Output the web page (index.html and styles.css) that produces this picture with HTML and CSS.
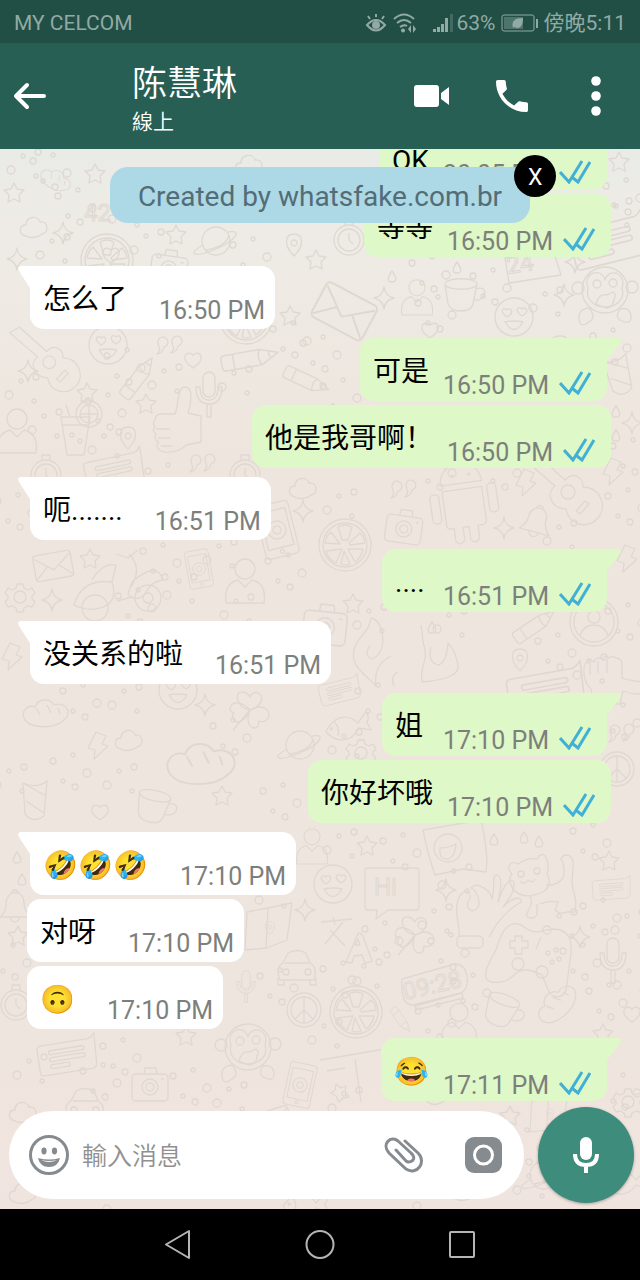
FILE: index.html
```html
<!DOCTYPE html>
<html lang="zh">
	<head>
		<meta charset="UTF-8">
		<meta name="viewport" content="width=device-width, initial-scale=1">
		<title>陈慧琳</title>
		<link rel="stylesheet" href="styles.css">
	</head>
	<body>
		<svg class="defs" width="0" height="0" aria-hidden="true">
			<defs>
				<symbol id="ticks" viewBox="0 0 32 24"><path d="M1 12l9 10L23 1M14 18l5 4L31 2"/></symbol>
				<!-- 背景小图案，原点都在中心 -->
				<path id="star" d="M0-9l3 6 7 1-5 5 1 7-6-3-6 3 1-7-5-5 7-1z"/>
				<path id="spark" d="M0-11q1 9 10 11q-9 2-10 11q-1-9-10-11q9-2 10-11z"/>
				<path id="heart" d="M0 8C-14-1-7-11 0-5C7-11 14-1 0 8z"/>
				<path id="cloud" d="M-9 9c-8-2-7-11 0-11c0-9 12-10 14-3c9-1 9 11 2 12c-3 3-12 5-16 2z"/>
				<path id="drop" d="M0-6c5 7 5 11 0 11s-5-4 0-11z"/>
				<path id="bolt" d="M-2-13L8-9L4-1l6 2L-4 14l1-9-7-2z"/>
				<path id="pin" d="M0 13C-11 2-9-9 0-9S11 2 0 13zM0-3a3 3 0 1 0 .1 0z"/>
				<path id="quotes" d="M-10-4a5 5 0 1 1 6 4q-1 6-7 7q4-4 2-7zM4-5a5 5 0 1 1 6 4q-1 6-7 7q4-4 2-7z"/>
				<g id="mic2"><rect x="-6" y="-20" width="12" height="25" rx="6"/><path d="M-13-5q0 17 13 17T13-5h-4q0 13-9 13T-9-5zM-2 12v13h4V12"/></g>
				<g id="clover"><path d="M0 0c-14-2-16-19-8-18q5 0 8 5q3-6 8-4c8 3 2 15-8 17c12-7 22 0 18 8q-3 5-9 3q0 7-5 7c-7-1-7-11-4-18c-4 10-12 15-16 10q-3-4 0-7q-6-2-3-7c3-6 13-3 19 4L-17 20"/></g>
				<g id="mail"><rect x="-19" y="-12" width="38" height="26" rx="3"/><path d="M-18-9L0 5L18-9M-18 12L-6 1M18 12L6 1"/></g>
				<g id="note"><path d="M-26-13h48q4-1 7-5l-2 31q-1 4-5 4h-48q-4 0-4-4v-22q0-4 4-4z"/><rect x="-19" y="-7" width="36" height="4" rx="2"/><rect x="-19" y="0" width="36" height="4" rx="2"/><rect x="-19" y="7" width="20" height="4" rx="2"/></g>
				<g id="smile"><circle r="19"/><path d="M-9 5q9 15 18 0q-9-2-18 0zM-7 0c-9-6-3-11 0-7c4-4 8 3 0 7zM8-1c-9-6-3-11 0-7c4-4 8 3 0 7z"/></g>
				<g id="camera"><rect x="-18" y="-11" width="36" height="27" rx="4"/><circle cy="2" r="8"/><circle cy="2" r="4"/><path d="M-6-11l1-6H6l1 6M11-6h3"/></g>
				<g id="citrus"><circle r="26"/><circle r="22"/><path d="M-3-5l-4-13q7-4 14 0l-4 13zM4-2l11-10q5 5 5 10l-15 2zM3 4l15 0q-2 9-8 13zM-3 4l-6 14q-8-4-10-12zM-5-1l-15-1q1-7 6-11zM-1 6l-3 13q5 2 9 0z"/></g>
				<g id="pencil"><path d="M-22-5h30L23 0L8 8h-30q-3 0-3-3v-7q0-3 3-3zM8-5q-4 6 0 13M-15-5V8M16-3q-2 3 0 6"/></g>
				<g id="cup"><path d="M-18-10c0-7 32-7 32 0s-32 7-32 0l3 20q3 7 13 7t12-7l4-20M13-5c12-5 12 12-1 11"/></g>
				<g id="planet"><circle r="14"/><path d="M-13 4c-19 11-6 12 13 4S28-12 12-9"/><path d="M-10 9q20-3 23-15"/></g>
				<g id="bell"><path d="M-15 9q7-6 6-14c1-14 18-14 18 0q0 8 7 14zM-5 10q5 8 10 0M-3-15a3 3 0 1 1 6 0"/></g>
				<g id="gear"><circle r="6"/><path d="M-3-13h6l1 4 4 2 4-2 3 5-3 3v3l3 3-3 5-4-1-4 2-1 4h-6l-1-4-4-2-4 1-3-5 3-3v-3l-3-3 3-5 4 2 4-2z"/></g>
				<g id="watch"><circle r="15"/><circle r="11"/><path d="M0-7v7l4 4M-4-15v-5h8v5"/></g>
				<g id="person"><circle cy="-14" r="10"/><path d="M-19 20c-2-15 4-21 12-23l7 7l7-7c9 2 14 9 12 23z"/></g>
				<g id="glass"><path d="M-14-16h29l-6 38H-8zM-13-8h27M-5-16l-4-12"/><circle cx="14" cy="-19" r="13"/><circle cx="14" cy="-19" r="9"/><circle cx="-3" cy="2" r="2"/><circle cx="5" cy="8" r="2"/><path d="M14-28v18M5-19h18"/></g>
				<g id="thumb"><path d="M-17-1q0-6 7-6h13c4-9 2-27 10-27c9 0 6 18 3 26l13 3v26l-15 3q-7 8-21 7c-8-1-10-7-6-10q-6-2-3-8q-5-4-1-7q-3-4 0-7z"/><path d="M-16 8h14M-14 17h12M-11 25H0"/></g>
				<g id="tablet"><rect x="-17" y="-27" width="34" height="54" rx="4"/><rect x="-13" y="-20" width="26" height="38"/><circle cy="22" r="2"/><circle r="9"/><circle r="4"/></g>
				<g id="scooter"><circle cx="-29" cy="18" r="13"/><circle cx="24" cy="8" r="13"/><circle cx="24" cy="8" r="5"/><path d="M-50 15q8-27 38-23q5 13-3 22q-16 10-35 1zM-32-10q11-18 24-15l-4 17M8-8q25-22 31-2q-12 1-18 14q-9 9-17 0zM-7 11l15-4M5-36q14 14 2 33M-8-36l12 4 10-8"/></g>
				<g id="android"><path d="M-20-16h40v34q0 4-5 4h-4v13q-5 6-9 0V22h-6v13q-5 6-9 0V22h-3q-4 0-4-4zM-21-22q2-19 21-19t21 19zM-13-37l-5-8M13-37l5-8"/><rect x="-33" y="-14" width="9" height="29" rx="4"/><rect x="25" y="-18" width="9" height="29" rx="4"/><circle cx="-8" cy="-30" r="1"/><circle cx="9" cy="-30" r="1"/></g>
				<g id="guitar"><path d="M-36-42l30 27c9-10 19-1 18 7c17 0 25 19 15 31c-11 12-29 7-32-9c-14 0-21-15-11-23l-31-27zM5 16l9-10 4 3-9 10z"/><circle cx="-3" cy="-3" r="7"/></g>
				<g id="pad"><path d="M-32-9c9-32 21-29 31-21c9 6 17 1 26 0c17 0 19 13 18 25l-5 36c-2 8-13 9-17 2l-7-17q-19-10-28 0q-8 9-23 7c-10-3-5-15 5-32z"/><path d="M-13-23h7v5h6v7h-6v6h-7v-6h-5v-7h5zM8-10l5-12"/><circle cx="-10" cy="5" r="6"/><circle cx="14" cy="13" r="6"/><circle cx="20" cy="-6" r="2"/><circle cx="28" cy="-9" r="2"/><circle cx="24" cy="3" r="2"/><circle cx="31" cy="0" r="2"/></g>
				<g id="cat"><path d="M-36-23q1-7 9-3q9-7 19-5q5-8 9-2q4 9 1 17q6 12-4 18q-20 9-30-3q-6-9-1-15q-4-4-3-7z"/><path d="M-15 5q3 8-1 14l-3 7q7 5 11-1v-11M-5 14q8-4 18-2l-3 8q5 5 12 2l8 0q2-8-1-20c-6-12 4-30-4-36q-6-3-9 3q5 8 2 19q-6 8-17 7M-25-9q4 5 8-1q5 4 7-1"/><circle cx="-24" cy="-16" r="3"/><circle cx="-8" cy="-19" r="3"/></g>
				<g id="okhand"><path d="M-20 21c1-10-4-21-2-31q1-11 9-14q5 2 4 7q-6 9 2 13q8-2 7-10q-2-10-8-13c6-8 21 4 21 11c4-15-1-24 5-24q7 2 1 27c6-19 14-26 16-19q1 9-11 24c8-9 19-12 18-5q-14 8-25 23l-7 12"/><rect x="-22" y="21" width="26" height="12" rx="4"/></g>
				<g id="car"><path d="M-17 14h34q4-13-4-17l-4-10q-9-5-18 0l-5 10q-8 4-3 17zM-12-3h24M-13 14v5h-6v-7M13 14v5h6v-7"/><circle cx="-11" cy="6" r="3"/><circle cx="11" cy="6" r="3"/></g>
				<g id="monkey"><circle r="23"/><path d="M-17-2c-6-16 14-21 17-8c4-13 22-7 17 8c4 12-7 19-17 19s-20-7-17-19z"/><circle cx="-27" cy="-2" r="6"/><circle cx="27" cy="-3" r="6"/><circle cx="-8" cy="-6" r="4"/><circle cx="8" cy="-7" r="4"/><path d="M-9 14q3-11 11-9l6-3q4 3 1 7q0 8-8 9zM-16 18q-11 1-10 11t10 3q8-5 0-14M15 19q10-2 11 7t-9 5q-8-3-2-12"/></g>
				<g id="fish"><path d="M-22 3c10-14 25-15 33-3l10-10q3 6-1 11l3 8-12-4c-9 13-24 12-33-2zM-12-5q5 6 1 14"/><circle cx="-16" cy="1" r="1"/></g>
				<g id="map"><path d="M-23-17l21-4 24-5-5 37-20 8-22 2zM-2-20l-2 39"/><use href="#pin" transform="translate(0 -2) scale(.6)"/></g>
				<g id="bread"><path d="M-20 6c-5-8 2-16 10-13c3-9 15-9 19-2c12-4 19 8 10 15c-9 9-32 9-39 0zM-9-6l4 7M2-9l4 8M13-6l2 6"/></g>
				<g id="kite"><path d="M-12-17q14 6 24-2l-3 35q-11 8-19-2zM-12-17l23 13M-9 1l18 12"/></g>
				<g id="peace"><circle r="17"/><circle r="13"/><path d="M0-13v26M0 0l-9 9M0 0l9 9"/></g>
				<g id="avatar"><circle r="24"/><circle r="20"/><circle cy="-5" r="6"/><path d="M-14 14q3-11 14-11t14 11"/></g>
				<g id="dino"><path d="M-24 30c-16-16-27-22-21-39c4-12 14-14 16-29q11 2 12 24q-2 14-11 17q-9-4-2-13M-24 30q-3-21 15-30M22 26c-3-18 8-20 1-40q-1-12-2-17M22 26q38-3 36-17q-3-16-10-22q-1 18-9 22q-12-2-8-18M-6 30q-4-10 4-14"/></g>
				<g id="dots"><circle cx="-17" cy="-9" r="3"/><circle cx="3" cy="-15" r="2"/><circle cx="17" cy="3" r="4"/><circle cx="-7" cy="11" r="2"/><circle cx="5" cy="17" r="3"/></g>
				<g id="dots2"><circle cx="-13" cy="5" r="4"/><circle cx="-1" cy="-9" r="2"/><circle cx="14" cy="-13" r="3"/><circle cx="12" cy="11" r="2"/></g>
			</defs>
		</svg>
		<div id="phone">
			<div class="status">
				<span class="carrier">MY CELCOM</span>
				<svg class="s-eye" viewBox="0 0 22 20"><path d="M2 12q9-10 18 0q-9 11-18 0z"/><circle cx="11" cy="12" r="3"/><path d="M11 4V1M5 6L3 3M17 6l2-3"/></svg>
				<svg class="s-wifi" viewBox="0 0 26 20"><path d="M2 6q10-9 20 0M5 10q7-6 14 0M8 14q4-3 7-1"/><path class="fill" d="M11 15.500a2 2 0 1 0 .1 0zM19 12v8l-3-4zM21 12v8l3-4z"/></svg>
				<svg class="s-signal" viewBox="0 0 21 20"><path d="M1 16h3v3H1zM5 14h3v5H5zM9 11h3v8H9zM13 5h3v14h-3z"/><path opacity=".3" d="M18 1h3v18h-3z"/></svg>
				<span class="percent">63%</span>
				<svg class="s-battery" viewBox="0 0 38 18"><rect x="1" y="1" width="32" height="16" rx="2"/><path class="level" d="M3 3h19v12H3z"/><path class="fill" d="M12 14c-2-7 2-10 10-10c0 8-3 12-9 9l4-5zM35 5h2v9h-2z"/></svg>
				<span class="clock">傍晚5:11</span>
			</div>
			<header class="top">
				<button class="back" type="button" aria-label="返回"><svg width="34" height="28" viewBox="0 0 34 28"><path d="M14 3L3 14l11 11M3 14h28"/></svg></button>
				<div class="who">
					<h1>陈慧琳</h1>
					<p>線上</p>
				</div>
				<div class="tools">
					<button type="button" aria-label="視訊"><svg width="36" height="24" viewBox="0 0 36 24"><path d="M3 1h19q3 0 3 3v16q0 3-3 3H3q-3 0-3-3V4q0-3 3-3zM27 9l8-6v18l-8-6z"/></svg></button>
					<button type="button" aria-label="通話"><svg width="32" height="32" viewBox="3 3 18 18"><path d="M6.620 10.790c1.440 2.830 3.760 5.140 6.590 6.590l2.200-2.200c.27-.27.67-.36 1.020-.24 1.120.37 2.330.57 3.570.57.55 0 1 .45 1 1V20c0 .55-.45 1-1 1-9.390 0-17-7.610-17-17 0-.55.45-1 1-1h3.500c.55 0 1 .45 1 1 0 1.250.2 2.450.57 3.570.11.35.03.74-.25 1.020l-2.200 2.200z"/></svg></button>
					<button type="button" aria-label="更多"><svg width="10" height="40" viewBox="0 0 10 40"><circle cx="5" cy="5" r="4.800"/><circle cx="5" cy="20" r="4.800"/><circle cx="5" cy="35" r="4.800"/></svg></button>
				</div>
			</header>
			<main class="chat">
				<svg class="doodles" viewBox="0 149 640 1060" preserveAspectRatio="xMidYMin slice" aria-hidden="true">
					<use href="#star" x="95" y="173"/><use href="#star" x="14" y="192"/><use href="#star" x="176" y="234"/><use href="#star" x="290" y="315"/><use href="#star" x="87" y="392"/><use href="#star" x="146" y="403"/><use href="#star" x="619" y="161"/><use href="#star" x="90" y="558"/><use href="#star" x="353" y="603"/><use href="#star" x="609" y="860"/><use href="#star" x="367" y="845"/><use href="#star" x="18" y="935"/><use href="#star" x="603" y="1033"/><use href="#star" x="510" y="1115"/><use href="#star" x="316" y="259"/><use href="#star" x="186" y="1035"/><use href="#star" x="222" y="795"/>
					<use href="#spark" x="63" y="233"/><use href="#spark" x="17" y="259"/><use href="#spark" x="28" y="371"/><use href="#spark" x="384" y="298"/><use href="#spark" x="564" y="295"/><use href="#spark" x="575" y="262"/><use href="#spark" x="52" y="600"/><use href="#spark" x="303" y="511"/><use href="#spark" x="504" y="528"/><use href="#spark" x="632" y="423"/><use href="#spark" x="446" y="890"/><use href="#spark" x="580" y="937"/><use href="#spark" x="305" y="910"/><use href="#spark" x="205" y="705"/>
					<use href="#heart" x="193" y="360"/><use href="#heart" x="111" y="255"/><use href="#heart" x="632" y="1014"/><use href="#heart" x="430" y="330"/><use href="#heart" x="100" y="812"/><use href="#heart" x="214" y="1185"/>
					<use href="#cloud" x="35" y="227"/><use href="#cloud" x="304" y="488"/><use href="#cloud" x="24" y="1112"/><use href="#cloud" x="24" y="1193"/><use href="#cloud" x="465" y="1190"/><use href="#cloud" x="250" y="165"/>
					<use href="#drop" x="392" y="277"/><use href="#drop" x="457" y="268"/><use href="#drop" x="616" y="412"/><use href="#drop" x="616" y="436"/><use href="#drop" x="17" y="858"/><use href="#drop" x="22" y="880"/><use href="#drop" x="524" y="838"/><use href="#drop" x="539" y="842"/><use href="#drop" x="494" y="840"/><use href="#drop" x="432" y="628"/>
					<use href="#bolt" x="526" y="482"/><use href="#bolt" x="613" y="471"/><use href="#bolt" x="12" y="656"/><use href="#bolt" x="627" y="558"/><use href="#bolt" x="98" y="745"/>
					<use href="#pin" x="294" y="243"/><use href="#pin" x="520" y="658"/><use href="#pin" x="128" y="436"/>
					<use href="#quotes" x="168" y="347"/><use href="#quotes" x="201" y="465"/><use href="#quotes" x="402" y="491"/><use href="#quotes" x="620" y="735"/>
					<use href="#mic2" x="209" y="392"/><use href="#mic2" x="613" y="958"/><use href="#mic2" transform="translate(246 985) scale(.7)"/>
					<use href="#clover" x="415" y="935"/><use href="#clover" x="250" y="710"/>
					<use href="#mail" transform="translate(53 565) rotate(-10)"/><use href="#mail" transform="translate(345 310) rotate(28) scale(1.500)"/><use href="#mail" transform="translate(272 1122) rotate(-17)"/>
					<use href="#note" transform="translate(115 470) rotate(-12)"/><use href="#note" transform="translate(612 888) rotate(-4) scale(.65)"/><use href="#note" transform="translate(68 1055) rotate(-9)"/><use href="#note" transform="translate(547 690) rotate(-10) scale(1.300)"/><use href="#note" transform="translate(340 690) rotate(-14) scale(.7)"/><use href="#note" transform="translate(610 240) rotate(-14) scale(1.300)"/>
					<use href="#smile" x="514" y="317"/><use href="#smile" x="333" y="884"/><use href="#smile" x="178" y="690"/><use href="#smile" x="108" y="345"/>
					<use href="#camera" transform="translate(404 527) rotate(8)"/><use href="#camera" transform="translate(169 267) rotate(8)"/><use href="#camera" transform="translate(325 625) rotate(6) scale(1.200)"/>
					<use href="#citrus" x="356" y="1012"/><use href="#citrus" x="107" y="260"/><use href="#citrus" x="345" y="545"/><use href="#citrus" x="246" y="318"/>
					<use href="#pencil" transform="translate(138 376) rotate(-52)"/><use href="#pencil" transform="translate(251 357) rotate(-10) scale(1.200)"/><use href="#pencil" transform="translate(308 380) rotate(25)"/><use href="#pencil" transform="translate(535 624) rotate(-34)"/><use href="#pencil" transform="translate(402 1020) rotate(55) scale(.6)"/>
					<use href="#cup" x="463" y="294"/><use href="#cup" transform="translate(503 1010) rotate(20)"/><use href="#planet" x="216" y="241"/><use href="#planet" x="544" y="1175"/>
					<use href="#bell" transform="translate(536 523) rotate(15)"/><use href="#bell" x="15" y="908"/><use href="#gear" x="20" y="597"/><use href="#gear" x="361" y="753"/><use href="#gear" x="628" y="1102"/><use href="#watch" x="349" y="240"/><use href="#watch" x="46" y="475"/><use href="#watch" x="245" y="475"/><use href="#watch" x="16" y="1005"/>
					<use href="#person" x="17" y="433"/><use href="#person" x="245" y="583"/><use href="#person" transform="translate(417 299) scale(.8)"/><use href="#glass" x="75" y="433"/><use href="#thumb" x="172" y="421"/><use href="#tablet" transform="translate(277 530) rotate(-14)"/><use href="#tablet" transform="translate(199 569) rotate(-10) scale(.7)"/><use href="#scooter" x="124" y="590"/>
					<use href="#android" transform="translate(464 505) rotate(-8)"/><use href="#guitar" x="571" y="495"/><use href="#pad" x="528" y="959"/><use href="#cat" x="545" y="890"/><use href="#okhand" x="479" y="915"/><use href="#car" x="297" y="966"/><use href="#monkey" x="605" y="290"/><use href="#monkey" x="248" y="1047"/><use href="#fish" transform="translate(347 725) rotate(-10)"/><use href="#map" x="270" y="929"/><use href="#bread" x="45" y="714"/><use href="#bread" x="560" y="350"/><use href="#kite" transform="translate(619 375) rotate(-15)"/><use href="#avatar" x="594" y="622"/><use href="#peace" x="617" y="769"/>
					<use href="#dino" x="400" y="656"/><use href="#bread" transform="translate(557 1005) rotate(-40)"/><use href="#bread" transform="translate(200 765) scale(1.500)"/><use href="#planet" x="300" y="745"/><use href="#person" transform="translate(459 1025) scale(.9)"/><use href="#thumb" transform="translate(615 675) rotate(90)"/><use href="#guitar" transform="translate(52 365) scale(.9)"/><use href="#bread" transform="translate(55 180) rotate(30) scale(.7)"/><use href="#kite" x="35" y="800"/><use href="#cup" transform="translate(155 806) rotate(12)"/><use href="#fish" x="305" y="1203"/><use href="#map" transform="translate(550 1115) scale(.8)"/><use href="#car" x="85" y="1104"/><use href="#fish" x="625" y="1180"/><use href="#camera" x="150" y="1085"/><use href="#peace" x="304" y="1010"/><use href="#mail" transform="translate(330 785) rotate(12)"/><use href="#cloud" x="130" y="740"/><use href="#kite" x="435" y="1085"/><use href="#tablet" transform="translate(300 1085) rotate(12) scale(.8)"/><use href="#person" transform="translate(312 848) scale(.8)"/>
					<path d="M368 868h48q3 0 3 3v36q0 3-3 3h-28l-12 9 1-9h-9q-3 0-3-3v-36q0-3 3-3zM423 830l58-10q5 20 6 42l-1 10-23-3-28 6q-6-16-12-45zM402 979l53-15q10 0 12 12t-6 17l-48 12q-8 0-10-9t-1-17zM415 1006l47-13 1 5-47 12zM321 922l31-3M333 917l2 8M325 944l18-22M330 930l15 16M346 962l11-26q2-6 6 0l9 25-7 2-3-8-8 1-2 7zM355 945l3-6 2 6zM320 1060l65-11 13 52M327 1071l18-3M336 1084l5 4 5-2-1 6 4 5-6 1-4 4-3-6-5-3 4-3zM355 1059l6 43M505 258l48-8 8 25-52 8z"/>
					<circle cx="448" cy="848" r="14"/><path d="M440 848q8 0 16-4q-1 14-9 15t-7-11z"/>
					<g class="letters"><text x="374" y="895">Hi</text><text x="405" y="1000" transform="rotate(-13 405 1000)">09:28</text><text x="508" y="274" transform="rotate(-9 508 274)">24</text><text x="84" y="221">42</text></g>
					<use href="#dots" x="50" y="170"/><use href="#dots2" x="24" y="165"/><use href="#dots" x="75" y="205"/><use href="#dots2" x="125" y="214"/><use href="#dots2" x="147" y="245"/><use href="#dots" x="250" y="254"/><use href="#dots2" x="53" y="250"/><use href="#dots" x="623" y="195"/><use href="#dots2" x="615" y="214"/><use href="#dots" x="429" y="272"/><use href="#dots" x="435" y="312"/><use href="#dots2" x="546" y="303"/><use href="#dots" x="490" y="285"/><use href="#dots" x="124" y="365"/><use href="#dots2" x="165" y="380"/><use href="#dots2" x="22" y="390"/><use href="#dots" x="290" y="338"/><use href="#dots2" x="235" y="382"/><use href="#dots" x="320" y="352"/><use href="#dots" x="340" y="395"/><use href="#dots2" x="45" y="425"/><use href="#dots" x="105" y="410"/><use href="#dots2" x="105" y="445"/><use href="#dots" x="165" y="480"/><use href="#dots" x="15" y="510"/><use href="#dots" x="160" y="560"/><use href="#dots2" x="180" y="590"/><use href="#dots" x="285" y="570"/><use href="#dots2" x="220" y="555"/><use href="#dots" x="135" y="605"/><use href="#dots2" x="237" y="610"/><use href="#dots" x="435" y="470"/><use href="#dots2" x="340" y="505"/><use href="#dots" x="500" y="470"/><use href="#dots" x="630" y="455"/><use href="#dots" x="625" y="505"/><use href="#dots2" x="560" y="536"/><use href="#dots" x="610" y="345"/><use href="#dots2" x="450" y="624"/><use href="#dots" x="555" y="650"/><use href="#dots2" x="370" y="620"/><use href="#dots" x="625" y="620"/><use href="#dots2" x="590" y="670"/><use href="#dots" x="375" y="700"/><use href="#dots" x="620" y="720"/><use href="#dots2" x="345" y="745"/><use href="#dots" x="230" y="735"/><use href="#dots2" x="125" y="700"/><use href="#dots" x="80" y="700"/><use href="#dots" x="70" y="770"/><use href="#dots2" x="120" y="780"/><use href="#dots" x="280" y="800"/><use href="#dots2" x="10" y="780"/><use href="#dots" x="400" y="850"/><use href="#dots2" x="340" y="845"/><use href="#dots" x="590" y="840"/><use href="#dots2" x="455" y="880"/><use href="#dots" x="382" y="938"/><use href="#dots2" x="435" y="920"/><use href="#dots" x="448" y="950"/><use href="#dots" x="340" y="978"/><use href="#dots2" x="365" y="975"/><use href="#dots" x="470" y="990"/><use href="#dots2" x="560" y="925"/><use href="#dots" x="600" y="915"/><use href="#dots2" x="628" y="925"/><use href="#dots" x="580" y="960"/><use href="#dots" x="606" y="1000"/><use href="#dots2" x="630" y="980"/><use href="#dots" x="435" y="1020"/><use href="#dots2" x="325" y="1035"/><use href="#dots" x="277" y="985"/><use href="#dots2" x="272" y="895"/><use href="#dots" x="10" y="960"/><use href="#dots" x="120" y="1055"/><use href="#dots2" x="30" y="1070"/><use href="#dots" x="190" y="1085"/><use href="#dots2" x="230" y="1098"/><use href="#dots" x="100" y="1080"/><use href="#dots2" x="345" y="1103"/><use href="#dots" x="620" y="1090"/><use href="#dots2" x="530" y="1185"/><use href="#dots" x="524" y="1145"/><use href="#dots2" x="120" y="1204"/><use href="#dots" x="400" y="1203"/>
				</svg>
				<ul class="messages">
					<li class="out first"><p>OK</p><time>20:05 PM</time><svg class="ticks"><use href="#ticks"/></svg></li>
					<li class="out"><p>等等</p><time>16:50 PM</time><svg class="ticks"><use href="#ticks"/></svg></li>
					<li class="in first"><p>怎么了</p><time>16:50 PM</time></li>
					<li class="out first"><p>可是</p><time>16:50 PM</time><svg class="ticks"><use href="#ticks"/></svg></li>
					<li class="out"><p>他是我哥啊！</p><time>16:50 PM</time><svg class="ticks"><use href="#ticks"/></svg></li>
					<li class="in first"><p>呃.......</p><time>16:51 PM</time></li>
					<li class="out first"><p>....</p><time>16:51 PM</time><svg class="ticks"><use href="#ticks"/></svg></li>
					<li class="in first"><p>没关系的啦</p><time>16:51 PM</time></li>
					<li class="out first"><p>姐</p><time>17:10 PM</time><svg class="ticks"><use href="#ticks"/></svg></li>
					<li class="out"><p>你好坏哦</p><time>17:10 PM</time><svg class="ticks"><use href="#ticks"/></svg></li>
					<li class="in first"><p>🤣🤣🤣</p><time>17:10 PM</time></li>
					<li class="in"><p>对呀</p><time>17:10 PM</time></li>
					<li class="in"><p>🙃</p><time>17:10 PM</time></li>
					<li class="out first"><p>😂</p><time>17:11 PM</time><svg class="ticks"><use href="#ticks"/></svg></li>
				</ul>
				<div class="notice">
					Created by whatsfake.com.br
					<button class="close" type="button">X</button>
				</div>
				<form class="composer">
					<div class="pill">
						<button type="button" aria-label="表情"><svg width="40" height="40" viewBox="0 0 40 40"><circle class="line" cx="20" cy="20" r="18.500"/><ellipse cx="15" cy="16" rx="2.600" ry="3.400"/><ellipse cx="25.500" cy="16" rx="2.600" ry="3.400"/><path d="M9 23q11 3 22 0q-2 9-11 9T9 23z"/><path class="tooth" d="M12 25q8 2 16 0q-8 4-16 0z"/></svg></button>
						<input type="text" placeholder="輸入消息" aria-label="輸入消息">
						<button type="button" aria-label="附件"><svg width="40" height="36" viewBox="0 0 40 36"><path class="line" d="M21 4l13 12c9 9-1 23-12 16L5 16C-3 7 7-2 14 4l13 12c7 6-1 11-5 8L12 13"/></svg></button>
						<button type="button" aria-label="相機"><svg width="38" height="36" viewBox="0 0 38 36"><rect width="37" height="36" rx="9"/><circle class="lens" cx="18.500" cy="18" r="9"/></svg></button>
					</div>
					<button class="mic" type="button" aria-label="錄音"><svg width="26" height="36" viewBox="0 0 26 36"><rect x="7" y="0" width="12" height="23" rx="6"/><path d="M2 17q0 11 11 11t11-11M13 28v8"/></svg></button>
				</form>
			</main>
			<nav class="keys">
				<button type="button" aria-label="返回"><svg width="30" height="32" viewBox="0 0 30 32"><path d="M26 2v27L3 15.500z"/></svg></button>
				<button type="button" aria-label="主畫面"><svg width="30" height="32" viewBox="0 0 30 32"><circle cx="15" cy="15.500" r="13.500"/></svg></button>
				<button type="button" aria-label="最近"><svg width="30" height="32" viewBox="0 0 30 32"><rect x="3" y="3" width="24" height="25" rx="1"/></svg></button>
			</nav>
		</div>
	</body>
</html>
```

FILE: styles.css
```css
*{
	margin: 0;
	padding: 0;
	box-sizing: border-box;
}
body{
	font-family: Roboto, "Noto Sans CJK SC", sans-serif;
	background: #000;
}
li{
	list-style: none;
}
button{
	border: 0;
	background: none;
	font-family: inherit;
	display: flex;
	align-items: center;
	justify-content: center;
	flex: none;
}
svg{
	display: block;
	flex: none;
}
.defs{
	position: absolute;
}
#phone{
	min-height: 100vh;
	display: flex;
	flex-direction: column;
}
/* 状态栏 */
.status{
	height: 43px;
	padding: 2px 14px 0;
	display: flex;
	align-items: center;
	background: #214f45;
	color: #92aaa4;
	font-size: 21px;
	line-height: 24px;
}
.carrier{
	flex: 1;
}
.status svg{
	height: 20px;
	fill: none;
	stroke: #92aaa4;
	stroke-width: 2;
}
.status .fill,
.status .s-signal{
	fill: #92aaa4;
	stroke: none;
}
.status circle{
	fill: #92aaa4;
}
.s-eye{
	width: 22px;
	margin-right: 5px;
}
.s-wifi{
	width: 26px;
	margin-right: 14px;
}
.s-signal{
	width: 21px;
	margin-right: 4px;
}
.status .s-battery{
	width: 38px;
	height: 18px;
	margin: 0 5px;
	stroke-width: 1;
}
.status .level{
	fill: #4d756c;
	stroke: none;
}
.clock{
	font-family: Roboto, "Noto Sans CJK TC", sans-serif;
}
/* 标题栏 */
.top{
	height: 106px;
	padding: 8px 39px 0 13px;
	display: flex;
	align-items: center;
	background: #285f54;
	color: #fff;
}
.top button{
	margin-bottom: 8px;
}
.back svg{
	fill: none;
	stroke: #fff;
	stroke-width: 4;
	stroke-linecap: round;
	stroke-linejoin: round;
}
.who{
	flex: 1;
	padding-left: 85px;
}
.who h1{
	font-size: 35px;
	line-height: 44px;
	font-weight: 350;
}
.who p{
	font: 350 21px/30px Roboto, "Noto Sans CJK TC", sans-serif;
}
.tools{
	display: flex;
	align-items: center;
	gap: 46px;
	fill: #fff;
}
.tools button:last-child{
	margin-left: 17px;
}
/* 聊天区 */
.chat{
	flex: 1;
	min-height: 0;
	position: relative;
	display: flex;
	flex-direction: column;
	background: linear-gradient(#e9ebe7, #eeebe6 70px, #eee6de 300px, #eee5de 800px, #f0e4df);
}
.doodles{
	position: absolute;
	top: 0;
	left: 0;
	width: 100%;
	height: 100%;
	fill: none;
	stroke: #dfd8d1;
	stroke-width: 1.3;
	stroke-linejoin: round;
}
.letters{
	font: 24px Roboto, sans-serif;
	stroke-width: 1;
}
.messages{
	position: relative;
	flex: 1 1 0;
	min-height: 0;
	overflow: hidden;
	padding: 0 29px 0 27px;
	display: flex;
	flex-direction: column;
	justify-content: flex-end;
}
.messages li{
	position: relative;
	flex: none;
	height: 63px;
	margin-top: 4px;
	display: flex;
	align-items: center;
	border-radius: 14px;
	font-size: 28px;
}
.messages .first{
	margin-top: 9px;
}
.messages p{
	flex: 1;
	line-height: 40px;
	padding-top: 4px;
}
.messages time{
	font-size: 25px;
	line-height: 30px;
	color: #7d7f7c;
	align-self: flex-end;
	margin-bottom: 3px;
}
.in{
	align-self: flex-start;
	background: #fff;
	padding: 0 10px 0 13px;
	gap: 32px;
}
.in.first{
	margin-left: 3px;
}
.out{
	align-self: flex-end;
	min-width: 225px;
	background: #dff8c7;
	padding: 0 16px 0 13px;
	gap: 14px;
}
.out.first{
	margin-right: 4px;
}
.out time{
	margin-bottom: 0;
}
.first::before{
	content: "";
	position: absolute;
	top: 0;
	width: 28px;
	height: 22px;
	background: inherit;
}
.in.first::before{
	left: -12px;
	clip-path: polygon(2px 0, 100% 0, 100% 100%, 12px 100%, 1px 5px, 0 2px);
}
.out.first::before{
	right: -14px;
	clip-path: polygon(0 0, 26px 0, 28px 2px, 27px 5px, 14px 100%, 0 100%);
}
.ticks{
	width: 32px;
	height: 24px;
	margin: 26px 0 0 -4px;
	fill: none;
	stroke: #42b0d5;
	stroke-width: 3;
}
.notice{
	position: absolute;
	top: 18px;
	left: 0;
	right: 0;
	width: fit-content;
	height: 56px;
	margin: 0 auto;
	padding: 0 28px;
	border-radius: 18px;
	background: #add8e6;
	color: #536d76;
	font-size: 28px;
	line-height: 59px;
}
.close{
	position: absolute;
	top: -12px;
	right: -26px;
	width: 42px;
	height: 42px;
	padding-top: 3px;
	border-radius: 50%;
	background: #000;
	color: #fff;
	font-size: 23px;
}
/* 输入栏 */
.composer{
	position: relative;
	display: flex;
	align-items: center;
	gap: 14px;
	padding: 6px 6px 6px 9px;
}
.pill{
	flex: 1;
	min-width: 0;
	height: 88px;
	padding: 0 21px 0 20px;
	display: flex;
	align-items: center;
	border-radius: 44px;
	background: #fff;
	fill: #868b90;
}
.pill .line{
	fill: none;
	stroke: #868b90;
	stroke-width: 3;
	stroke-linecap: round;
}
.pill .tooth{
	fill: #fff;
}
.pill .lens{
	stroke: #fff;
	stroke-width: 3;
}
.pill button:last-child{
	margin-left: 41px;
}
.pill input{
	flex: 1;
	min-width: 0;
	height: 40px;
	padding: 2px 13px 0;
	border: 0;
	outline: 0;
	background: none;
	font: 350 25px Roboto, "Noto Sans CJK TC", sans-serif;
}
.pill input::placeholder{
	color: #909090;
}
.mic{
	width: 96px;
	height: 96px;
	border-radius: 50%;
	background: #3d8c7c;
	box-shadow: 0 1px 3px rgba(0, 0, 0, .3);
}
.mic svg{
	fill: #fff;
}
.mic path{
	fill: none;
	stroke: #fff;
	stroke-width: 4;
}
/* 导航键 */
.keys{
	height: 71px;
	display: flex;
	align-items: center;
	justify-content: center;
	gap: 112px;
	background: #000;
}
.keys svg{
	fill: none;
	stroke: #b5b5b5;
	stroke-width: 2;
	stroke-linejoin: round;
}
```
